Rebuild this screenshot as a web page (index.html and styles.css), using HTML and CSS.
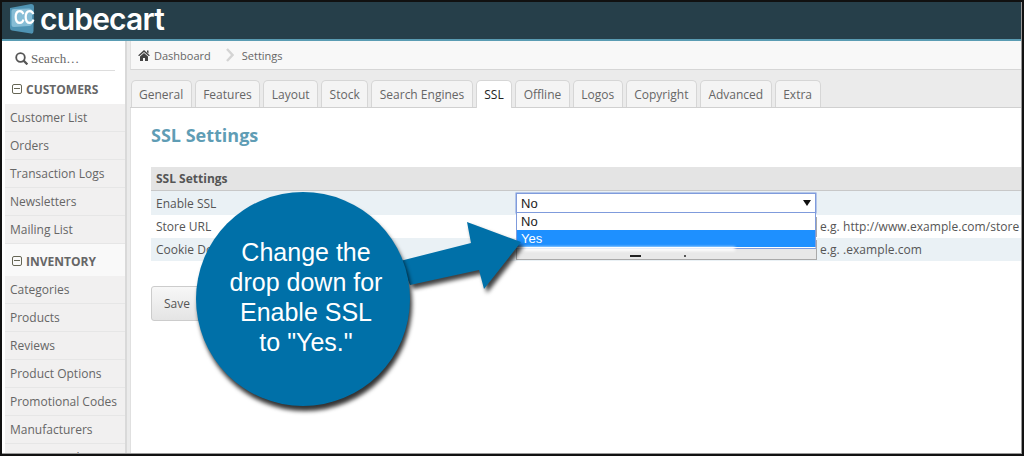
FILE: index.html
```html
<!DOCTYPE html>
<html lang="en">
<head>
<meta charset="utf-8">
<title>SSL Settings</title>
<link rel="stylesheet" href="styles.css">
</head>
<body>
<div class="frame">
  <header class="topbar">
    <svg class="logo-cube" width="26" height="30" viewBox="0 0 26 30"><path d="M1 4 L22 0 Q25 0 25 3 L24.5 27 Q24.5 30 22 29.6 L3 26.5 Q1 26 1 24Z" fill="#4f93b3"/><path d="M2.5 7 Q2.5 5 5 5 L20 4.5 Q23 4.5 23 7.5 L23 19 Q23 22 20 22 L5 23 Q2.5 23 2.5 20.5Z" fill="#86bdd6"/></svg>
    <span class="logo-cc">CC</span>
    <span class="logo-text">cubecart</span>
  </header>
  <div class="columns">
    <aside class="sidebar">
      <div class="search"><svg width="13" height="13" viewBox="0 0 13 13"><circle cx="5.5" cy="5.5" r="4.3" fill="none" stroke="#555" stroke-width="1.8"/><path d="M8.6 8.6 L12.4 12.4" stroke="#555" stroke-width="2.2"/></svg><span>Search…</span></div>
      <div class="nav-head"><span class="minus"></span>CUSTOMERS</div>
      <div class="nav-item">Customer List</div>
      <div class="nav-item">Orders</div>
      <div class="nav-item">Transaction Logs</div>
      <div class="nav-item">Newsletters</div>
      <div class="nav-item">Mailing List</div>
      <div class="nav-head alt"><span class="minus"></span>INVENTORY</div>
      <div class="nav-item">Categories</div>
      <div class="nav-item">Products</div>
      <div class="nav-item">Reviews</div>
      <div class="nav-item">Product Options</div>
      <div class="nav-item">Promotional Codes</div>
      <div class="nav-item">Manufacturers</div>
      <div class="nav-item">Import Catalog</div>
    </aside>
    <main class="main">
      <div class="crumbs">
        <svg width="12" height="11" viewBox="0 0 12 11"><path d="M6 0 L12 5.6 L10.6 6 L6 2 L1.4 6 L0 5.6Z M2 6.4 L6 3 L10 6.4 V11 H7 V8 H5 V11 H2Z M9 0.5 H10.5 V3.5 L9 2.2Z" fill="#444"/></svg>
        <span>Dashboard</span>
        <svg class="chev" width="8" height="14" viewBox="0 0 8 14"><path d="M1 1 L6.5 7 L1 13" fill="none" stroke="#d4d4d4" stroke-width="2.4"/></svg>
        <span>Settings</span>
      </div>
      <nav class="tabs">
        <div class="tab">General</div><div class="tab">Features</div><div class="tab">Layout</div><div class="tab">Stock</div><div class="tab">Search Engines</div><div class="tab active">SSL</div><div class="tab">Offline</div><div class="tab">Logos</div><div class="tab">Copyright</div><div class="tab">Advanced</div><div class="tab">Extra</div>
      </nav>
      <section class="panel">
        <h1>SSL Settings</h1>
        <div class="table">
          <div class="thead">SSL Settings</div>
          <div class="row shade first"><span class="label">Enable SSL</span>
            <div class="select"><span>No</span><i class="caret"></i></div>
          </div>
          <div class="row"><span class="label">Store URL</span><div class="field"></div><span class="hint">e.g. http://www.example.com/store</span></div>
          <div class="row shade"><span class="label">Cookie Domain</span><div class="field grey"></div><span class="hint">e.g. .example.com</span></div>
        </div>
        <button class="save">Save</button>
      </section>
    </main>
  </div>
  <div class="dropdown"><div>No</div><div class="on">Yes</div></div>
  <div class="smear"></div>
  <div class="speck one"></div>
  <div class="speck two"></div>
  <svg class="arrow" width="130" height="95" viewBox="0 0 130 95"><path d="M0 54 L71 36 L67 15 L121 35 L84 82 L79 63 L10 78Z" fill="#0070a8"/></svg>
  <div class="bubble">Change the<br>drop down for<br>Enable SSL<br>to "Yes."</div>
</div>
</body>
</html>
```
FILE: styles.css
```css
* { box-sizing: border-box; }
html, body { margin: 0; height: 100%; }
body { font-family: "Open Sans", "Liberation Sans", sans-serif; font-size: 12px; color: #555; background: #fff; overflow: hidden; }
.frame { width: 1024px; height: 456px; border: 2px solid #111; position: relative; overflow: hidden; display: flex; flex-direction: column; background: #fff; }
.frame::after { content: ""; position: absolute; inset: 0; box-shadow: inset -1px -1px 0 #999; pointer-events: none; z-index: 9; }
.topbar { height: 39px; flex: none; background: #263f4a; border-bottom: 2px solid #5a9cb3; display: flex; align-items: center; padding-left: 7px; position: relative; }
.logo-cube { margin-top: -3px; flex: none; }
.logo-cc { position: absolute; left: 9px; top: 4px; width: 24px; text-align: center; color: #fff; font: 700 20px "Liberation Sans", sans-serif; letter-spacing: -1px; transform: scaleX(.75); }
.logo-text { margin-left: 5px; color: #fff; font: 600 30px/30px "Inter", "Liberation Sans", sans-serif; letter-spacing: -0.8px; margin-top: -4px; }
.columns { flex: 1; display: flex; min-height: 0; }
.sidebar { width: 125px; flex: none; background: #fff; border-right: 2px solid #d9d9d9; padding-left: 3px; overflow: hidden; }
.search { margin: 6px 10px 0 5px; height: 24px; background: #fff; border-bottom: 1px solid #ddd; display: flex; align-items: center; gap: 3px; padding-left: 5px; font: 13px "Liberation Serif", serif; color: #666; }
.nav-head { height: 32px; padding-top: 2px; background: #f1f0f0; display: flex; align-items: center; font-weight: 700; font-size: 12px; color: #666; padding-left: 7px; gap: 4px; }
.search + .nav-head { margin-top: 1px; background: #fff; }
.nav-head.alt { background: #f9f9f9; }
.minus { width: 10px; height: 10px; border: 1.5px solid #665; border-radius: 2px; position: relative; display: inline-block; }
.minus::after { content: ""; position: absolute; left: 1px; right: 1px; top: 2.5px; height: 1.5px; background: #665; }
.nav-item { height: 28px; background: #f1f0f0; border-bottom: 1px solid #e6e6e6; padding-left: 5px; line-height: 27px; color: #666; white-space: nowrap; }
.main { flex: 1; min-width: 0; background: #ebebeb; padding-left: 3px; display: flex; flex-direction: column; }
.crumbs { height: 29px; flex: none; background: #f8f8f8; border-bottom: 1px solid #d6d6d6; border-left: 1px solid #e0e0e0; display: flex; align-items: center; padding-left: 7px; font-size: 11px; color: #666; gap: 4px; }
.chev { margin: 0 4px 0 11px; }
.tabs { flex: none; display: flex; padding: 10px 0 0 0.5px; gap: 3px; height: 38px; border-bottom: 1px solid #d0d0d0; }
.tab { height: 27px; padding: 0 7.5px; border: 1px solid #d6d6d6; border-bottom: 0; border-radius: 5px 5px 0 0; background: #f4f4f4; color: #666; font-size: 12px; line-height: 27px; }
.tab.active { background: #fff; color: #222; height: 28px; position: relative; z-index: 1; }
.panel { flex: 1; background: #fff; padding: 15px 0 0 20px; border-left: 1px solid #e0e0e0; min-height: 0; }
h1 { margin: 0; font-size: 18px; line-height: 25px; font-weight: 700; color: #5f9db5; }
.table { margin-top: 19px; }
.thead { height: 24px; background: #e4e4e4; border-bottom: 1px solid #c8c8c8; font-weight: 700; padding-left: 5px; line-height: 24px; color: #555; }
.row { height: 23px; display: flex; align-items: center; position: relative; }
.row.first { height: 24px; }
.row.shade { background: #eaf1f5; }
.label { width: 365px; flex: none; padding-left: 5px; }
.select { width: 300px; height: 20px; border: 1px solid #7f9bdc; background: #fff; color: #222; display: flex; align-items: center; justify-content: space-between; padding: 0 4px 0 4px; box-shadow: 0 0 0 0.5px #7f9bdc; position: relative; z-index: 2; font: 13px "Liberation Sans", sans-serif; }
.caret { width: 0; height: 0; border: 4px solid transparent; border-top: 6px solid #111; border-bottom: 0; }
.field { width: 301px; height: 20px; border: 1px solid #aaa; background: #fff; }
.field.grey { background: #e8e8e8; }
.hint { margin-left: 3px; white-space: nowrap; letter-spacing: 0.06px; }
.save { margin-top: 25px; height: 35px; width: 86px; display: block; text-align: left; padding-left: 12px; border: 1px solid #ccc; border-radius: 3px; background: linear-gradient(#f7f7f7, #e4e4e4); font: 12px "Open Sans", sans-serif; color: #555; }
.dropdown { position: absolute; left: 514px; top: 211px; width: 300px; height: 35px; background: #fff; border: 1px solid #7f9bdc; border-top: 0; border-bottom-color: #fff; color: #222; font: 13px/17px "Liberation Sans", sans-serif; box-shadow: 0 1px 0 #7f9bdc; z-index: 3; }
.dropdown div { padding-left: 4px; height: 17px; }
.dropdown .on { background: #1e90ff; color: #fff; }
.smear { position: absolute; left: 515px; top: 245px; width: 218px; height: 4px; background: #fff; filter: blur(1.5px); z-index: 3; }
.speck { position: absolute; top: 253px; height: 2px; background: #222; z-index: 3; }
.speck.one { left: 628px; width: 11px; }
.speck.two { left: 682px; width: 2px; background: #555; }
.arrow { position: absolute; left: 398px; top: 205px; filter: drop-shadow(3px 4px 2px rgba(0,0,0,.75)); z-index: 4; }
.bubble { position: absolute; left: 194px; top: 190px; width: 214px; height: 214px; border-radius: 50%; background: #0070a8; color: #fff; box-shadow: 2px 5px 4px rgba(0,0,0,.8); font: 25px/30px "Liberation Sans", sans-serif; text-align: center; padding: 45px 0 0 6px; z-index: 5; }
```
